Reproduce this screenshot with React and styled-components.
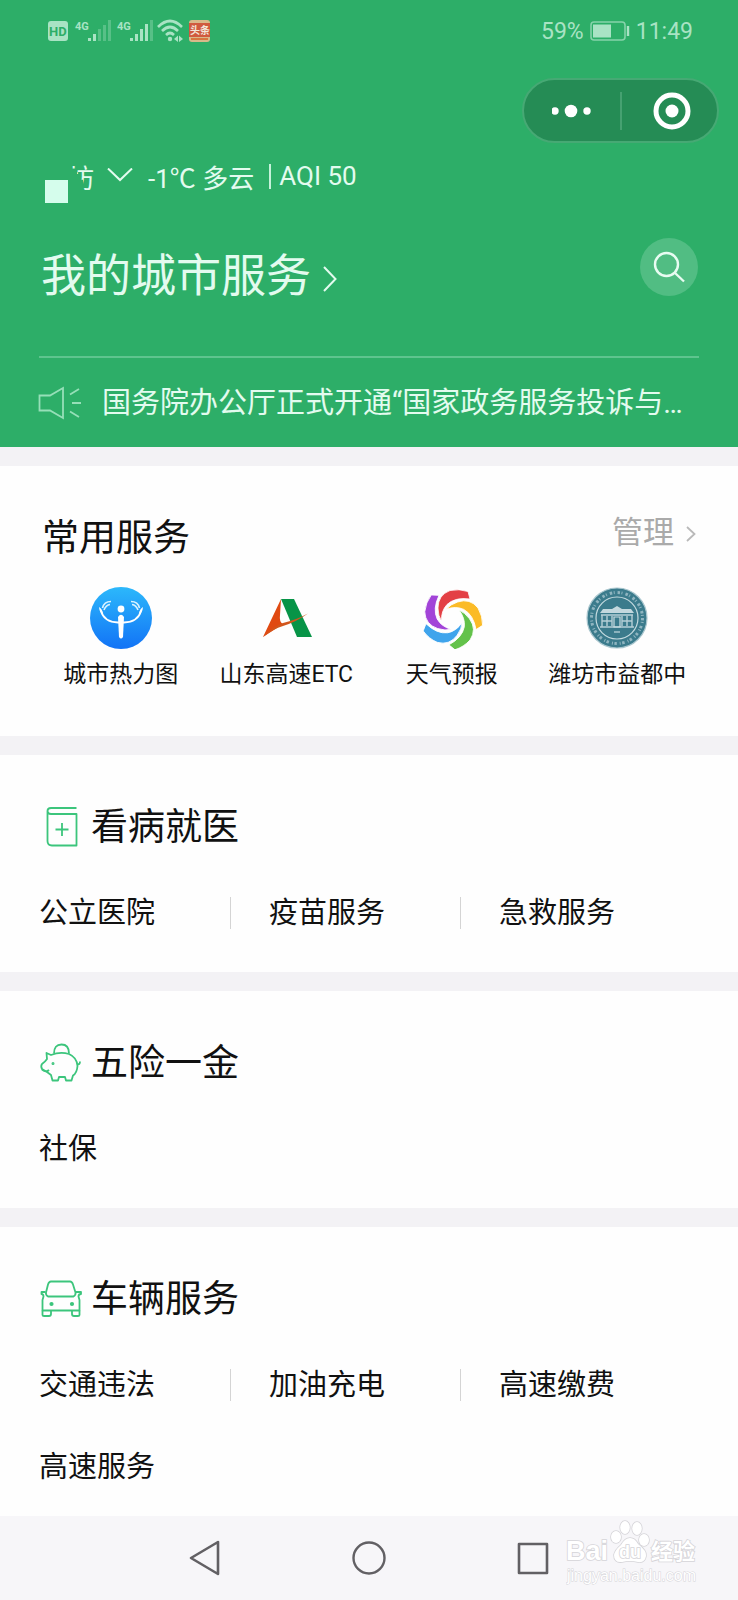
import React from "react"
import styled, { createGlobalStyle } from "styled-components";

const commonServices = [
    {name: "城市热力图", icon: <HeatIcon/>},
    {name: "山东高速ETC", icon: <EtcIcon/>},
    {name: "天气预报", icon: <WeatherIcon/>},
    {name: "潍坊市益都中", icon: <HospitalIcon/>},
]

const sections = [
    {title: "看病就医", icon: <BookIcon/>, links: ["公立医院", "疫苗服务", "急救服务"]},
    {title: "五险一金", icon: <PigIcon/>, links: ["社保"]},
    {title: "车辆服务", icon: <CarIcon/>, links: ["交通违法", "加油充电", "高速缴费", "高速服务"]},
]

const App = () => {
    return (
        <Page lang="zh-CN">
            <GlobalStyle/>
            <Header>
                <StatusBar>
                    <SignalIcons/>
                    <StatusRight>
                        <span>59%</span>
                        <BatteryIcon/>
                        <span>11:49</span>
                    </StatusRight>
                </StatusBar>
                <Capsule>
                    <CapsuleButton aria-label="更多">
                        <svg width="40" height="40" viewBox="1 0 40 40" fill="#fff">
                            <circle cx="4" cy="20" r="3.7"/>
                            <circle cx="20" cy="20" r="6.3"/>
                            <circle cx="36" cy="20" r="3.7"/>
                        </svg>
                    </CapsuleButton>
                    <CapsuleLine/>
                    <CapsuleButton aria-label="关闭">
                        <svg width="40" height="40" viewBox="-3 0 40 40" fill="#fff" overflow="visible">
                            <circle cx="20" cy="20" r="16" fill="none" stroke="#fff" strokeWidth="5"/>
                            <circle cx="20" cy="20" r="6.5"/>
                        </svg>
                    </CapsuleButton>
                </Capsule>
                <WeatherRow>
                    <CityButton>
                        <CityName>坊</CityName>
                        <svg width="26" height="16" viewBox="0 2 26 16" fill="none" stroke="#e3fbef" strokeWidth="2">
                            <path d="M1 2.500 L13 14 L25 2.500"/>
                        </svg>
                    </CityButton>
                    <span>-1℃ 多云</span>
                    <WeatherLine/>
                    <span>AQI 50</span>
                </WeatherRow>
                <TitleRow>
                    <TitleLink href="#services">
                        <TitleText>我的城市服务</TitleText>
                        <svg width="14" height="26" viewBox="0 -2 14 26" fill="none" stroke="#e3fbef" strokeWidth="2" overflow="visible">
                            <path d="M1 1 L12.5 13 L1 25"/>
                        </svg>
                    </TitleLink>
                    <SearchButton aria-label="搜索">
                        <svg width="34" height="34" viewBox="0 0 34 34" fill="none" stroke="#e8fcf2" strokeWidth="2.4">
                            <circle cx="14.5" cy="14.5" r="11.5"/>
                            <path d="M23 23 L32 31.5"/>
                        </svg>
                    </SearchButton>
                </TitleRow>
                <Notice href="#notice">
                    <SpeakerIcon/>
                    <NoticeText>国务院办公厅正式开通“国家政务服务投诉与…</NoticeText>
                </Notice>
            </Header>

            <Section>
                <CommonHead>
                    <SectionTitle>常用服务</SectionTitle>
                    <ManageLink href="#manage">
                        管理
                        <svg width="10" height="16" viewBox="0 -1 10 16" fill="none" stroke="#b9b9b9" strokeWidth="1.8" overflow="visible">
                            <path d="M1 1 L8.5 8 L1 15"/>
                        </svg>
                    </ManageLink>
                </CommonHead>
                <CommonGrid>
                    {commonServices.map(item => (
                        <CommonItem href="#service" key={item.name}>
                            {item.icon}
                            {item.name}
                        </CommonItem>
                    ))}
                </CommonGrid>
            </Section>

            {sections.map(section => (
                <Section key={section.title}>
                    <SectionHead>
                        {section.icon}
                        <SectionTitle>{section.title}</SectionTitle>
                    </SectionHead>
                    <LinkGrid>
                        {section.links.map(link => <ServiceLink href="#service" key={link}>{link}</ServiceLink>)}
                    </LinkGrid>
                </Section>
            ))}

            <NavBar>
                <NavButton aria-label="返回">
                    <svg width="36" height="40" viewBox="0 0 36 40" fill="none" stroke="#626064" strokeWidth="2.6" strokeLinejoin="round">
                        <path d="M31 4 V36 L4 20 Z"/>
                    </svg>
                </NavButton>
                <NavButton aria-label="主页">
                    <svg width="36" height="40" viewBox="0 0 36 40" fill="none" stroke="#626064" strokeWidth="2.4">
                        <circle cx="18" cy="20" r="15.5"/>
                    </svg>
                </NavButton>
                <NavButton aria-label="最近任务">
                    <svg width="36" height="40" viewBox="0 0 36 40" fill="none" stroke="#626064" strokeWidth="2.6" strokeLinejoin="round">
                        <rect x="4" y="6" width="28" height="29"/>
                    </svg>
                </NavButton>
                <Watermark/>
            </NavBar>
        </Page>
    )
}

function SignalIcons() {
    return (
        <svg width="166" height="28" viewBox="0 0 166 28" fill="#a9e3c4" fontFamily="Roboto, sans-serif">
            <rect x="1" y="4" width="20" height="20" rx="3"/>
            <text x="2" y="19" fontSize="13" fontWeight="700" fill="#2dae68">HD</text>
            <text x="28" y="13" fontSize="11" fontWeight="700">4G</text>
            <rect x="41" y="21" width="3" height="3"/>
            <rect x="46" y="17" width="3" height="7"/>
            <rect x="51" y="12" width="3" height="12" opacity="0.35"/>
            <rect x="56" y="8" width="3" height="16" opacity="0.35"/>
            <rect x="61" y="3" width="3" height="21" opacity="0.35"/>
            <text x="70" y="13" fontSize="11" fontWeight="700">4G</text>
            <rect x="83" y="21" width="3" height="3"/>
            <rect x="88" y="17" width="3" height="7"/>
            <rect x="93" y="12" width="3" height="12"/>
            <rect x="98" y="7" width="3" height="17"/>
            <rect x="103" y="3" width="3" height="21" opacity="0.35"/>
            <g fill="none" stroke="#a9e3c4" strokeWidth="2.6">
                <path d="M111 10 Q123 -2 135 10"/>
                <path d="M115 14 Q123 6 131 14"/>
                <path d="M119 18 Q123 14 127 18"/>
            </g>
            <circle cx="123" cy="22" r="2.2"/>
            <path d="M127 22 L131 18.5 V25 Z M136 22 L132 18.5 V25 Z"/>
            <rect x="142" y="3" width="21" height="22" rx="3" fill="#d9b98a"/>
            <rect x="142" y="6" width="21" height="14" fill="#d05a3f"/>
            <rect x="144" y="21" width="17" height="2" fill="#d8763f"/>
            <text x="143" y="17" fontSize="10" fontWeight="700" fill="#f3e6da" fontFamily="Noto Sans CJK SC, sans-serif">头条</text>
        </svg>
    )
}

function BatteryIcon() {
    return (
        <svg width="40" height="20" viewBox="0 0 40 20">
            <rect x="1" y="1" width="34" height="18" rx="3" fill="none" stroke="#86d3aa" strokeWidth="1.6"/>
            <rect x="3" y="3.5" width="18" height="13" fill="#a9e3c4"/>
            <path d="M38 5 V15" stroke="#a9e3c4" strokeWidth="2.4"/>
        </svg>
    )
}

function SpeakerIcon() {
    return (
        <svg width="44" height="34" viewBox="0 0 44 34" fill="none" stroke="#96dfb8" strokeWidth="1.8">
            <path d="M1.5 9.5 H12 L25 2 V32 L12 24.5 H1.5 Z"/>
            <path d="M32 8.5 L41 3 M34 17 H43 M32 25.5 L41 31"/>
        </svg>
    )
}

function HeatIcon() {
    return (
        <svg width="62" height="62" viewBox="0 0 62 62">
            <defs>
                <linearGradient id="heat" x1="0" y1="0" x2="0" y2="1">
                    <stop offset="0" stopColor="#2cb8fb"/>
                    <stop offset="1" stopColor="#1273f6"/>
                </linearGradient>
            </defs>
            <circle cx="31" cy="31" r="31" fill="url(#heat)"/>
            <circle cx="31" cy="22" r="3.4" fill="#fff"/>
            <path d="M28 30 Q31 25.500 34 30 L33 50 Q31 53 29 50 Z" fill="#fff"/>
            <path d="M11 24 Q14 35 28 35.5 H34 Q48 35 51 24" fill="none" stroke="#fff" strokeWidth="1.8"/>
            <path d="M9 20 Q9.500 26 13 27 Q12.500 22 9 20 Z M53 20 Q52.500 26 49 27 Q49.500 22 53 20 Z" fill="#fff"/>
            <path d="M12.500 21 Q14 14.500 21 14.500 M14 23 Q16 18 20 17.500 M49.500 21 Q48 14.500 41 14.500 M48 23 Q46 18 42 17.500" fill="none" stroke="#d9f2ff" strokeWidth="1.600"/>
        </svg>
    )
}

function EtcIcon() {
    return (
        <svg width="62" height="62" viewBox="6 0 62 62">
            <path d="M32 12 H45 L63 50 H48 Z" fill="#079447"/>
            <path d="M32 12 L14 50 L34 37 Q30 35 31 28 Z" fill="#e04a12"/>
            <path d="M14 50 Q26 38 34 36 Q47 33 59 26.500 Q47 35 34 39 Q24 42 14 50 Z" fill="#d2561c"/>
        </svg>
    )
}

function WeatherIcon() {
    const petals = ["#a244d8", "#e34045", "#fbbb27", "#63c24a", "#3fa4ec"]
    return (
        <svg width="62" height="62" viewBox="0 1 62 62">
            {petals.map((color, i) => (
                <path
                    key={color}
                    d="M49 13 L47 5.500 Q38 2.500 29 4.500 Q17 9 17 22 Q17 30 20.500 35 Q20 25 26 18.500 Q34 11 49 13 Z"
                    fill={color}
                    stroke="#fff"
                    strokeWidth="0.8"
                    transform={`rotate(${(i - 1) * 72} 31 32.5)`}
                />
            ))}
        </svg>
    )
}

function HospitalIcon() {
    return (
        <svg width="62" height="62" viewBox="0 0 62 62">
            <circle cx="31" cy="31" r="30" fill="#3b7b8c" stroke="#a9c6ce" strokeWidth="1.200"/>
            <circle cx="31" cy="31" r="25.500" fill="none" stroke="#8fb5c0" strokeWidth="3" strokeDasharray="2.500 1.500 1 3"/>
            <circle cx="31" cy="31" r="21" fill="#3b7b8c" stroke="#c5dbe0" strokeWidth="1.200"/>
            <path d="M14 26 L17 22 H26 L31 19 L36 22 H45 L48 26 Z" fill="#c3d8de"/>
            <path d="M15 28 H47 M14 40 H48 M16 28 V40 M21 29 V39 M26 29 V39 M36 29 V39 M41 29 V39 M46 28 V40 M16 34 H26 M36 34 H46" stroke="#b5cfd6" strokeWidth="1.400" fill="none"/>
            <path d="M28 30 H34 V40 H28 Z" fill="none" stroke="#c9dde2" strokeWidth="1.200"/>
            <path d="M28 45 H34" stroke="#a9c6ce" strokeWidth="1.500"/>
        </svg>
    )
}

function BookIcon() {
    return (
        <LineSvg>
            <path d="M37.500 2 H12 Q8.500 2 8.500 5 Q8.500 8 12 8 H37.500 V39.500 H13 Q8.500 39.500 8.500 35 V5"/>
            <path d="M23 17 V30 M16.500 23.500 H29.500"/>
        </LineSvg>
    )
}

function PigIcon() {
    return (
        <LineSvg>
            <path d="M15 11.500 Q15 2.500 22.500 2.500 Q30 2.500 30 11.500"/>
            <path d="M12 13 Q21 9.500 30 12 Q38 15.500 38.500 24 Q38 31 34 33.500 L32.500 38.500 H27 L26 35 H20 L19 38.500 H13.500 L12 33 L8 30 L3 27 Q1.500 24 3 22 Q6 20 8 17 L7.500 11 Z"/>
            <path d="M38.500 22 Q41 23 41 19.500 M3 27.500 Q7 31 10 28"/>
            <circle cx="14" cy="21.500" r="0.600"/>
        </LineSvg>
    )
}

function CarIcon() {
    return (
        <LineSvg>
            <path d="M12 3.500 H31 Q33 3.500 34 6.500 L36.500 14.500 Q37 17 34.500 18.500 H9 Q6.500 17 7 14.500 L9 6.500 Q10 3.500 12 3.500 Z"/>
            <path d="M6.500 14 H2.500 V16 Q4.500 16 4.500 18.500 L3.500 22 V32.500 H40.500 V22 L39.500 18.500 Q39.500 16 42 16 V14 H37"/>
            <path d="M3.500 32.500 V37 Q3.500 38 5 38 H10 Q12 38 12 36 V32.500 M33 32.500 V36 Q33 38 35 38 H39 Q40.500 38 40.500 37 V32.500"/>
            <circle cx="12.500" cy="26" r="1.200" fill="#3cc57c"/>
            <circle cx="33" cy="26" r="1.200" fill="#3cc57c"/>
        </LineSvg>
    )
}

function Watermark() {
    return (
        <WatermarkSvg width="136" height="72" viewBox="0 0 136 72" fill="#fff" stroke="#d5d4d8" strokeWidth="1.600" paintOrder="stroke">
            <text x="0" y="42" fontSize="27" fontWeight="700" fontFamily="Liberation Sans, sans-serif">Bai</text>
            <ellipse cx="50" cy="19" rx="5" ry="6"/>
            <ellipse cx="59" cy="9.500" rx="4.800" ry="6.500"/>
            <ellipse cx="71" cy="10.500" rx="4.800" ry="6.500"/>
            <ellipse cx="78" cy="22" rx="5" ry="6"/>
            <path d="M64 20 Q69 20 72 26 Q81 33 80 38 Q79 45 72 44 Q64 42 56 44 Q48 45 48 37 Q49 32 55 27 Q59 20 64 20 Z"/>
            <text x="53" y="40" fontSize="18" fontWeight="700" fontFamily="Liberation Sans, sans-serif">du</text>
            <text x="85" y="41" fontSize="22" fontWeight="700" fontFamily="Noto Sans CJK SC, sans-serif">经验</text>
            <text x="1" y="63" fontSize="16" strokeWidth="1" fontFamily="Liberation Sans, sans-serif">jingyan.baidu.com</text>
        </WatermarkSvg>
    )
}

const GlobalStyle = createGlobalStyle`
  * {
    box-sizing: border-box;
  }
  body {
    margin: 0;
    background-color: #f3f2f5;
    color: #111111;
    font-family: Roboto, "Noto Sans CJK SC", sans-serif;
  }
  a {
    color: inherit;
    text-decoration: none;
  }
  button {
    padding: 0;
    border: none;
    background: none;
    color: inherit;
    font: inherit;
    cursor: pointer;
  }
  svg {
    flex-shrink: 0;
  }
`

const Page = styled.div`
  display: flex;
  flex-direction: column;
  min-height: 100vh;
`

const Header = styled.header`
  background-color: #2dae68;
  color: #e3fbef;
`

const StatusBar = styled.div`
  height: 62px;
  padding: 0 45px 0 47px;
  display: flex;
  align-items: center;
  justify-content: space-between;
`

const StatusRight = styled.div`
  display: flex;
  align-items: center;
  gap: 6px;
  color: #a9e3c4;
  font-size: 23px;
`

const Capsule = styled.div`
  width: 197px;
  height: 65px;
  margin: 16px 19px 0 auto;
  display: flex;
  align-items: center;
  border: 2px solid #46a974;
  border-radius: 33px;
  background-color: #258c55;
`

const CapsuleButton = styled.button`
  flex: 1;
  display: flex;
  justify-content: center;
`

const CapsuleLine = styled.span`
  width: 2px;
  height: 38px;
  background-color: #46a171;
`

const WeatherRow = styled.div`
  height: 38px;
  margin-top: 14px;
  padding-left: 68px;
  display: flex;
  align-items: center;
  font-size: 26px;
`

const CityButton = styled.button`
  position: relative;
  margin-right: 15px;
  display: flex;
  align-items: center;
  gap: 13px;
  &::before {
    content: "";
    position: absolute;
    left: -23px;
    top: 22px;
    width: 23px;
    height: 23px;
    background-color: #d5fdec;
  }
`

const CityName = styled.span`
  clip-path: polygon(4px 0, 100% 0, 100% 100%, 15px 100%, 15px 60%, 9px 60%, 9px 30%, 4px 30%);
`

const WeatherLine = styled.span`
  width: 2px;
  height: 25px;
  margin: 0 8px 0 15px;
  background-color: #c5f2da;
`

const TitleRow = styled.div`
  margin: 41px 39px 0;
  padding-bottom: 58px;
  display: flex;
  align-items: center;
  justify-content: space-between;
  border-bottom: 2px solid #5ec48e;
`

const TitleLink = styled.a`
  display: flex;
  align-items: center;
  gap: 12px;
  padding: 20px 0 0 2px;
`

const TitleText = styled.h1`
  margin: 0;
  font-size: 45px;
  line-height: 42px;
  font-weight: 400;
`

const SearchButton = styled.button`
  width: 58px;
  height: 58px;
  margin-right: 1px;
  display: flex;
  align-items: center;
  justify-content: center;
  border-radius: 50%;
  background-color: #51bd83;
`

const Notice = styled.a`
  height: 89px;
  padding: 0 38px;
  display: flex;
  align-items: center;
  gap: 20px;
`

const NoticeText = styled.span`
  font-size: 29px;
  line-height: 32px;
  white-space: nowrap;
`

const Section = styled.section`
  margin-top: 19px;
  padding-bottom: 43px;
  background-color: #fefefe;
  &:last-of-type {
    flex: 1;
    padding-bottom: 32px;
  }
`

const SectionHead = styled.div`
  padding: 51px 38px 0;
  display: flex;
  align-items: center;
  gap: 9px;
`

const SectionTitle = styled.h2`
  margin: 0;
  font-size: 37px;
  line-height: 44px;
  font-weight: 400;
`

const CommonHead = styled.div`
  padding: 51px 42px 0;
  display: flex;
  justify-content: space-between;
`

const ManageLink = styled.a`
  display: flex;
  align-items: center;
  gap: 12px;
  font-size: 31px;
  line-height: 32px;
  height: 32px;
  color: #aaaaaa;
`

const CommonGrid = styled.div`
  padding: 26px 38px 2px;
  display: grid;
  grid-template-columns: repeat(4, 1fr);
`

const CommonItem = styled.a`
  display: flex;
  flex-direction: column;
  align-items: center;
  gap: 10px;
  font-size: 23px;
  line-height: 32px;
  white-space: nowrap;
`

const LinkGrid = styled.div`
  margin: 47px 48px 0 0;
  display: grid;
  grid-template-columns: repeat(3, 1fr);
  row-gap: 50px;
`

const ServiceLink = styled.a`
  height: 32px;
  padding-left: 38px;
  border-left: 1px solid #d4d4d4;
  font-size: 29px;
  line-height: 32px;
  &:nth-child(3n + 1) {
    border-left-color: transparent;
  }
`

const LineSvg = styled.svg.attrs({width: 44, height: 42, viewBox: "-1 1 44 42"})`
  fill: none;
  stroke: #3cc57c;
  stroke-width: 1.8;
  stroke-linejoin: round;
  overflow: visible;
`

const NavBar = styled.nav`
  position: relative;
  height: 84px;
  display: flex;
  align-items: center;
  justify-content: center;
  gap: 128px;
  background-color: #f7f6f9;
`

const NavButton = styled.button`
  display: flex;
`

// the logo lies over the bar's right end
const WatermarkSvg = styled.svg`
  position: absolute;
  right: 36px;
  top: 2px;
`

export default App
